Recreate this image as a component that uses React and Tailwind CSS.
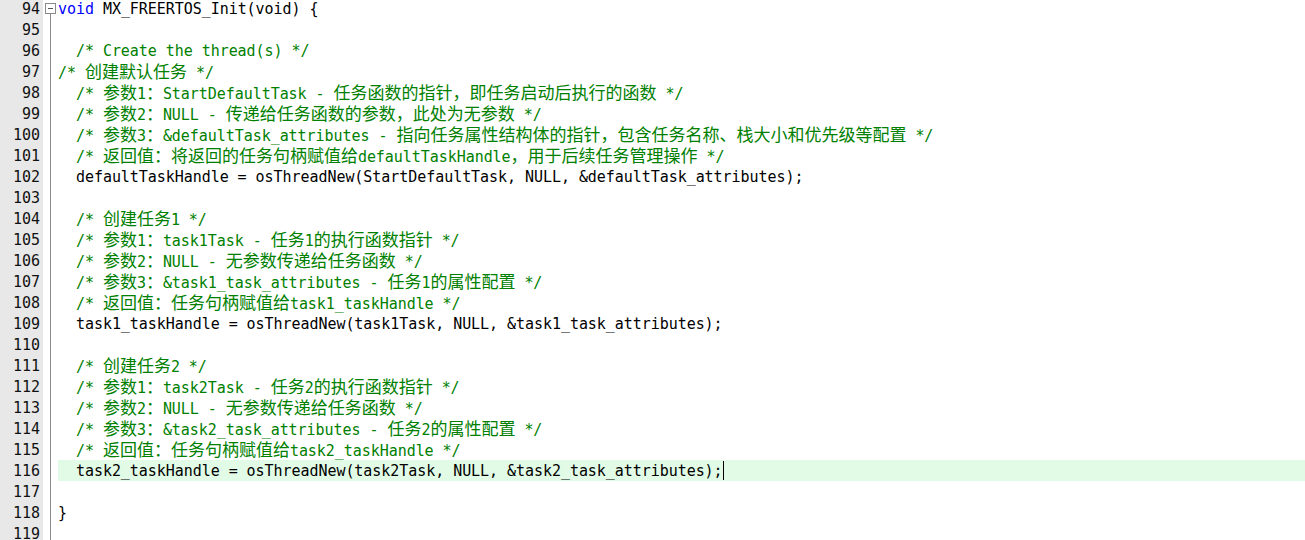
import React from "react";

const lines = [
  [{ t: "void", c: "kw" }, { t: " MX_FREERTOS_Init(void) {" }],
  [],
  [{ t: "  /* Create the thread(s) */", c: "cm" }],
  [{ t: "/* 创建默认任务 */", c: "cm" }],
  [{ t: "  /* 参数1：StartDefaultTask - 任务函数的指针，即任务启动后执行的函数 */", c: "cm" }],
  [{ t: "  /* 参数2：NULL - 传递给任务函数的参数，此处为无参数 */", c: "cm" }],
  [{ t: "  /* 参数3：&defaultTask_attributes - 指向任务属性结构体的指针，包含任务名称、栈大小和优先级等配置 */", c: "cm" }],
  [{ t: "  /* 返回值：将返回的任务句柄赋值给defaultTaskHandle，用于后续任务管理操作 */", c: "cm" }],
  [{ t: "  defaultTaskHandle = osThreadNew(StartDefaultTask, NULL, &defaultTask_attributes);" }],
  [],
  [{ t: "  /* 创建任务1 */", c: "cm" }],
  [{ t: "  /* 参数1：task1Task - 任务1的执行函数指针 */", c: "cm" }],
  [{ t: "  /* 参数2：NULL - 无参数传递给任务函数 */", c: "cm" }],
  [{ t: "  /* 参数3：&task1_task_attributes - 任务1的属性配置 */", c: "cm" }],
  [{ t: "  /* 返回值：任务句柄赋值给task1_taskHandle */", c: "cm" }],
  [{ t: "  task1_taskHandle = osThreadNew(task1Task, NULL, &task1_task_attributes);" }],
  [],
  [{ t: "  /* 创建任务2 */", c: "cm" }],
  [{ t: "  /* 参数1：task2Task - 任务2的执行函数指针 */", c: "cm" }],
  [{ t: "  /* 参数2：NULL - 无参数传递给任务函数 */", c: "cm" }],
  [{ t: "  /* 参数3：&task2_task_attributes - 任务2的属性配置 */", c: "cm" }],
  [{ t: "  /* 返回值：任务句柄赋值给task2_taskHandle */", c: "cm" }],
  [{ t: "  task2_taskHandle = osThreadNew(task2Task, NULL, &task2_task_attributes);" }],
  [],
  [{ t: "}" }],
  [],
];

const FIRST = 94;
const CURRENT = 116;
const cjk = /([\u3000-\u303f\u4e00-\u9fff\uff00-\uffef]+)/;

const colors = {
  kw: "text-[#0000ff]",
  cm: "text-[#008000]",
};

// split so that CJK runs get the wider CJK font
const Run = ({ text, cls }) => (
  <span className={cls || "text-black"}>
    {text.split(cjk).map((part, i) =>
      i % 2 === 1 ? (
        <span
          key={i}
          className="text-[17px] leading-none tracking-normal"
          style={{ fontFamily: '"Noto Sans CJK SC", sans-serif' }}
        >
          {part}
        </span>
      ) : (
        <span key={i}>{part}</span>
      )
    )}
  </span>
);

const FoldMark = ({ n, last }) => {
  if (n === FIRST) {
    return (
      <svg width="15" height="21" className="block">
        <line x1="7.5" y1="16" x2="7.5" y2="21" stroke="#8a8a8a" />
        <rect x="2.5" y="5.5" width="10" height="10" fill="white" stroke="#8a8a8a" />
        <line x1="5" y1="10.5" x2="10" y2="10.5" stroke="#555" />
      </svg>
    );
  }
  if (last) {
    return (
      <svg width="15" height="21" className="block">
        <line x1="7.5" y1="0" x2="7.5" y2="17.5" stroke="#8a8a8a" />
        <line x1="7.5" y1="17.5" x2="14" y2="17.5" stroke="#8a8a8a" />
      </svg>
    );
  }
  return (
    <svg width="15" height="21" className="block">
      <line x1="7.5" y1="0" x2="7.5" y2="21" stroke="#8a8a8a" />
    </svg>
  );
};

export default function App() {
  return (
    <div
      className="w-[1305px] h-[540px] overflow-hidden bg-white flex"
      style={{ fontFamily: '"DejaVu Sans Mono", monospace' }}
    >
      <div className="flex flex-col -mt-[2px] w-full">
        {lines.map((runs, i) => {
          const n = FIRST + i;
          const active = n === CURRENT;
          return (
            <div key={n} className="flex h-[21px] shrink-0">
              <div className="w-[43px] shrink-0 bg-[#e8e8e8] text-right pr-[3px] pt-[1px] text-[15px] tracking-[-0.05px] leading-[20px] text-[#111]">
                {n}
              </div>
              <div className="w-[15px] shrink-0">
                <FoldMark n={n} last={i === lines.length - 1} />
              </div>
              <div
                className={`flex-1 whitespace-pre pt-[1px] text-[15px] tracking-[-0.05px] leading-[20px] ${
                  active ? "bg-[#e2fbe6]" : ""
                }`}
              >
                {runs.map((r, j) => (
                  <Run key={j} text={r.t} cls={colors[r.c]} />
                ))}
                {active && (
                  <span className="inline-block w-[1px] h-[19px] bg-black align-middle -mt-[2px]" />
                )}
              </div>
            </div>
          );
        })}
      </div>
    </div>
  );
}
